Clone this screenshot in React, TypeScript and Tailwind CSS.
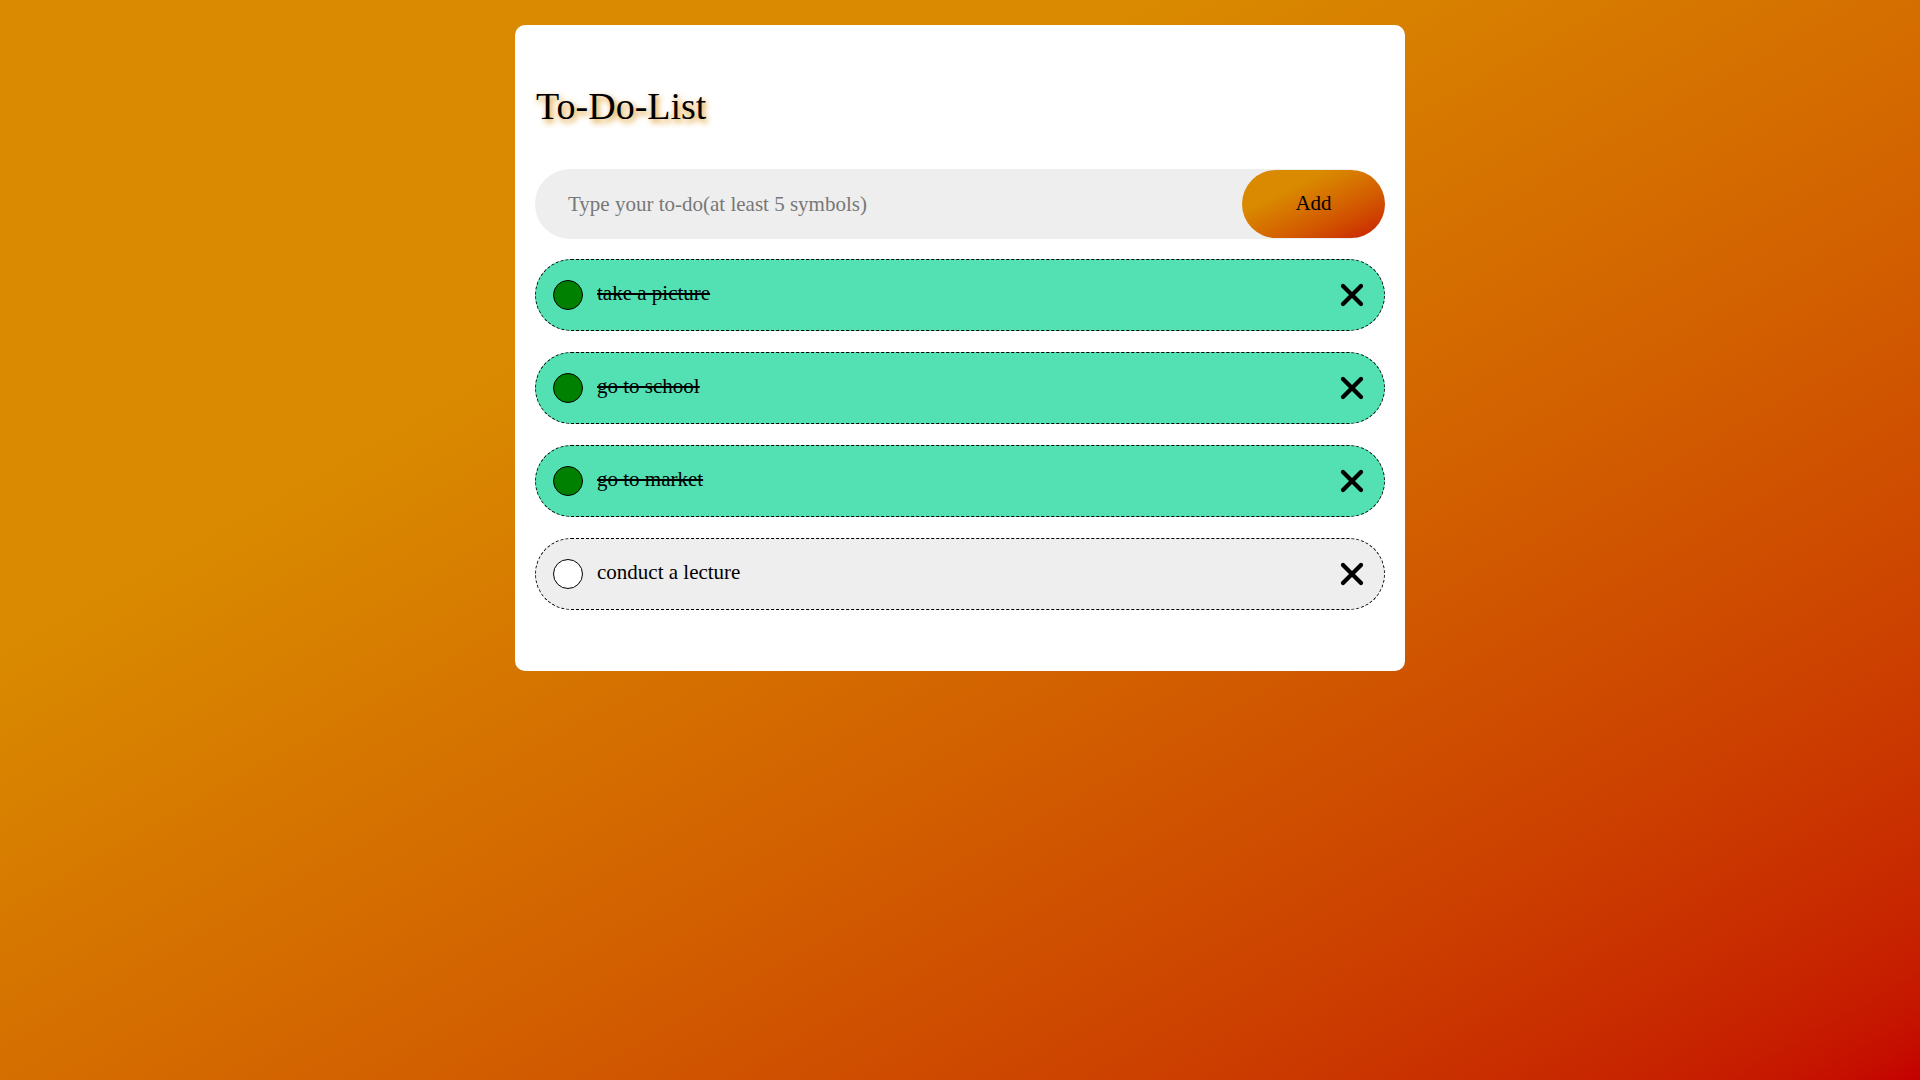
import { useState } from "react";

type Todo = { id: number; text: string; done: boolean };

const initial: Todo[] = [
  { id: 1, text: "take a picture", done: true },
  { id: 2, text: "go to school", done: true },
  { id: 3, text: "go to market", done: true },
  { id: 4, text: "conduct a lecture", done: false },
];

const CloseIcon = () => (
  <svg width="24" height="24" viewBox="0 0 24 24" fill="none" stroke="black" strokeWidth="4.2" strokeLinecap="round">
    <path d="M3 3 21 21" />
    <path d="M21 3 3 21" />
  </svg>
);

const App = () => {
  const [todos, setTodos] = useState<Todo[]>(initial);
  const [value, setValue] = useState("");

  const add = () => {
    if (value.trim().length < 5) return;
    setTodos([...todos, { id: Date.now(), text: value.trim(), done: false }]);
    setValue("");
  };

  return (
    <div className="min-h-screen w-full bg-gradient-to-br from-[#d98a00] from-30% to-[#c40000] pt-[25px] font-['Liberation_Serif','Times_New_Roman',serif]">
      <div className="mx-auto w-[890px] rounded-[10px] bg-white px-5 pt-[59px] pb-[61px]">
        {/* title */}
        <h1 className="pl-px text-[38px] leading-[44px] text-black [text-shadow:2px_3px_6px_#d98a00]">To-Do-List</h1>

        {/* input row */}
        <div className="mt-[41px] flex h-[70px] items-center rounded-full bg-[#eeeeee]">
          <input
            value={value}
            onChange={(e) => setValue(e.target.value)}
            placeholder="Type your to-do(at least 5 symbols)"
            className="h-full flex-1 bg-transparent pl-[33px] text-[21px] text-black outline-none placeholder:text-[#777777]"
          />
          <button
            onClick={add}
            className="h-[68px] w-[143px] cursor-pointer rounded-full bg-gradient-to-br from-[#d98a00] from-30% to-[#c81000] text-[21px] text-black"
          >
            Add
          </button>
        </div>

        {/* list */}
        <ul className="mt-5 flex flex-col gap-[21px]">
          {todos.map((t) => (
            <li
              key={t.id}
              className={`flex h-[72px] items-center rounded-full border border-dashed border-black pl-[17px] pr-[20px] ${t.done ? "bg-[#53e1b4]" : "bg-[#eeeeee]"}`}
            >
              <button
                onClick={() => setTodos(todos.map((x) => (x.id === t.id ? { ...x, done: !x.done } : x)))}
                className={`h-[30px] w-[30px] shrink-0 cursor-pointer rounded-full border border-black ${t.done ? "bg-[#008000]" : "bg-white"}`}
              />
              <span className={`ml-[14px] -mt-[2px] flex-1 text-[21px] text-black ${t.done ? "line-through decoration-2" : ""}`}>{t.text}</span>
              <button
                onClick={() => setTodos(todos.filter((x) => x.id !== t.id))}
                className="cursor-pointer"
              >
                <CloseIcon />
              </button>
            </li>
          ))}
        </ul>
      </div>
    </div>
  );
};

export default App;
